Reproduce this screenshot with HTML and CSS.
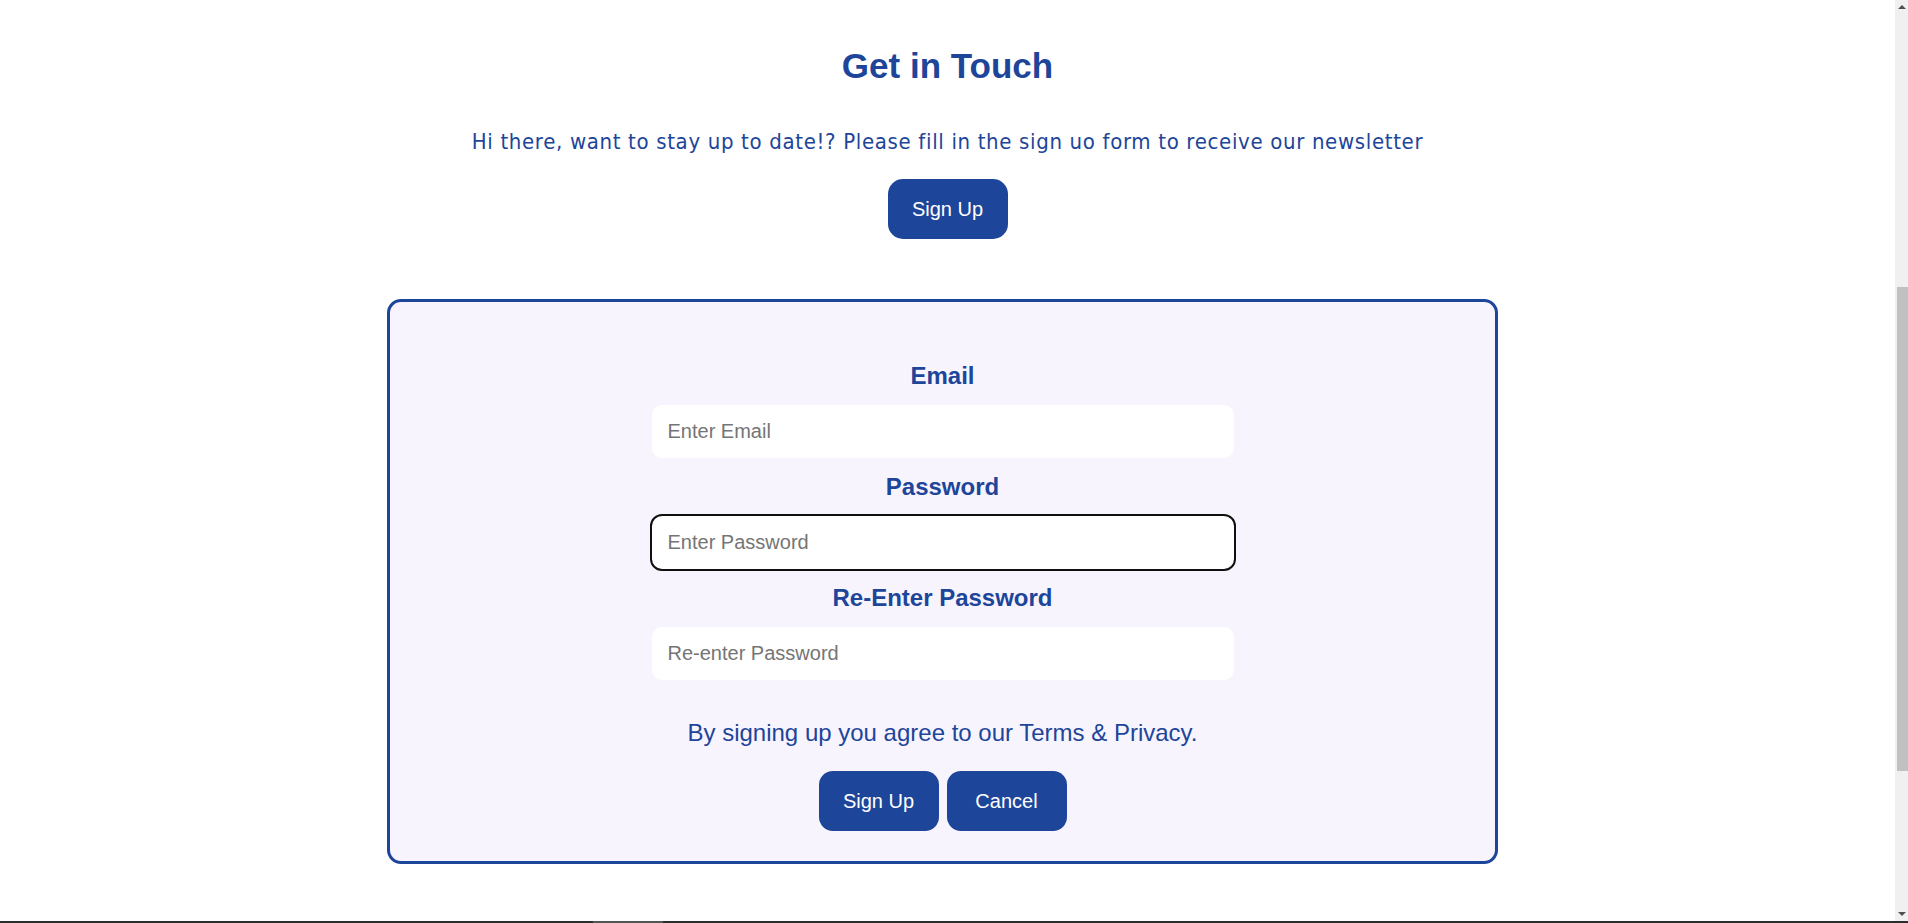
FILE: index.html
```html
<!DOCTYPE html>
<html lang="en">
<head>
<meta charset="utf-8">
<title>Get in Touch</title>
<link rel="stylesheet" href="styles.css">
</head>
<body>
<main class="page">
  <section class="intro">
    <h1 class="intro__title">Get in Touch</h1>
    <p class="intro__text">Hi there, want to stay up to date!? Please fill in the sign uo form to receive our newsletter</p>
    <button class="btn" type="button">Sign Up</button>
  </section>
  <div class="card-wrap">
    <form class="card">
      <label class="card__label" for="email">Email</label>
      <input class="card__input" id="email" type="email" placeholder="Enter Email">
      <label class="card__label" for="password">Password</label>
      <input class="card__input card__input--active" id="password" type="password" placeholder="Enter Password">
      <label class="card__label" for="password2">Re-Enter Password</label>
      <input class="card__input" id="password2" type="password" placeholder="Re-enter Password">
      <p class="card__terms">By signing up you agree to our Terms &amp; Privacy.</p>
      <div class="card__actions">
        <button class="btn" type="submit">Sign Up</button>
        <button class="btn" type="button">Cancel</button>
      </div>
    </form>
  </div>
</main>
<div class="scrollbar" aria-hidden="true">
  <span class="scrollbar__up"></span>
  <span class="scrollbar__thumb"></span>
  <span class="scrollbar__down"></span>
</div>
<div class="screen-edge" aria-hidden="true"></div>
</body>
</html>
```

FILE: styles.css
```css
* {
  box-sizing: border-box;
}

html,
body {
  margin: 0;
  background: #ffffff;
}

body {
  padding-right: 13px;
  font-family: "Liberation Sans", Arial, sans-serif;
  color: #1d4599;
  overflow: hidden;
}

.page {
  display: flex;
  flex-direction: column;
  align-items: stretch;
}

.intro {
  display: flex;
  flex-direction: column;
  align-items: center;
  text-align: center;
}

.intro__title {
  margin: 46px 0 0;
  font-size: 35px;
  line-height: 40px;
  font-weight: 700;
  color: #1d4599;
}

.intro__text {
  margin: 43px 0 0;
  font-family: "DejaVu Sans Condensed", "DejaVu Sans", sans-serif;
  font-stretch: condensed;
  font-size: 22px;
  line-height: 26px;
  letter-spacing: 0.66px;
  color: #1d4599;
}

.btn {
  display: inline-flex;
  align-items: center;
  justify-content: center;
  width: 120px;
  height: 60px;
  padding: 0;
  border: none;
  border-radius: 14px;
  background: #1d4599;
  color: #ffffff;
  font-family: "Liberation Sans", Arial, sans-serif;
  font-size: 20px;
  line-height: 24px;
  cursor: pointer;
}

.intro .btn {
  margin-top: 24px;
  border-radius: 15px;
}

.card-wrap {
  display: flex;
  justify-content: center;
  padding-right: 10px;
  margin-top: 60px;
}

.card {
  display: flex;
  flex-direction: column;
  align-items: center;
  width: 1111px;
  padding: 60px 0 30px;
  border: 3px solid #1d4599;
  border-radius: 14px;
  background: #f8f4fe;
}

.card__label {
  display: block;
  font-size: 24px;
  line-height: 28px;
  font-weight: 700;
  color: #1d4599;
  margin-bottom: 15px;
}

.card__input {
  display: block;
  width: 582px;
  height: 53px;
  margin: 0 0 15px;
  padding: 0 16px;
  border: none;
  border-radius: 10px;
  background: #ffffff;
  font-family: "Liberation Sans", Arial, sans-serif;
  font-size: 20px;
  color: #222222;
}

.card__input::placeholder {
  color: #757575;
}

.card__input--active {
  outline: 2px solid #101010;
  outline-offset: 0;
}

.card__terms {
  margin: 24px 0 0;
  font-size: 24px;
  line-height: 28px;
  color: #1d4599;
}

.card__actions {
  display: flex;
  gap: 8px;
  margin-top: 24px;
}

.scrollbar {
  position: fixed;
  top: 0;
  right: 0;
  bottom: 2px;
  width: 13px;
  background: #f0f0f0;
}

.scrollbar__thumb {
  position: absolute;
  top: 287px;
  left: 2px;
  right: 0;
  height: 484px;
  background: #c1c1c1;
}

.scrollbar__up,
.scrollbar__down {
  position: absolute;
  left: 3px;
  width: 0;
  height: 0;
  border-left: 4px solid transparent;
  border-right: 4px solid transparent;
}

.scrollbar__up {
  top: 5px;
  border-bottom: 4px solid #505050;
}

.scrollbar__down {
  bottom: 5px;
  border-top: 4px solid #505050;
}

.screen-edge {
  position: fixed;
  left: 0;
  right: 0;
  bottom: 0;
  height: 2px;
  background: linear-gradient(to right, #2d2d2d 593px, #555555 593px, #555555 663px, #2d2d2d 663px);
}
```
